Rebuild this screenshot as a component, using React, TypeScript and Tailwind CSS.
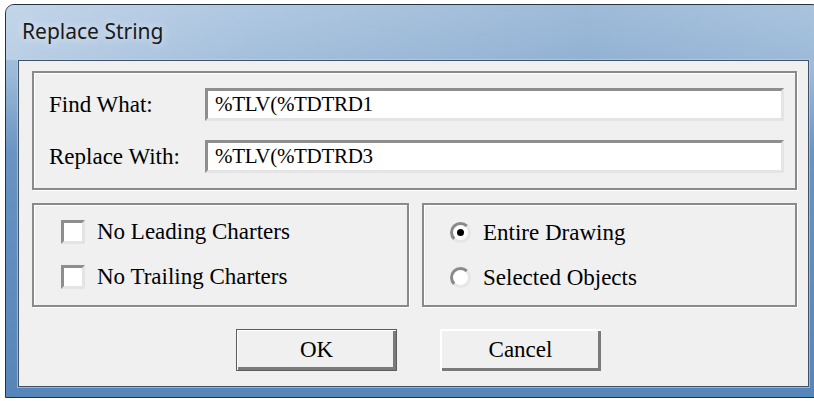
import type { ReactNode } from "react"

const serif = "font-['Liberation_Serif','Times_New_Roman',serif]"

// sunken white box used by edits and check boxes
const sunken = "bg-white border-[3px] border-t-[#8e8e8e] border-l-[#8e8e8e] border-b-[#e4e4e4] border-r-[#e4e4e4]"

function GroupBox({ className, children }: { className: string; children: ReactNode }) {
    return (
        <div className={"border-2 border-[#8a8a8a] shadow-[inset_1px_1px_0_#ffffff,1px_1px_0_#ffffff] " + className}>
            {children}
        </div>
    )
}

function Field({ label, value }: { label: string; value: string }) {
    return (
        <div className="flex items-center">
            <span className="w-[156px] text-[23px] leading-[33px] text-black">{label}</span>
            <div className={sunken + " flex-1 h-[33px] flex items-center pl-[7px]"}>
                <span className="text-[21px] text-black tracking-[-0.3px]">{value}</span>
            </div>
        </div>
    )
}

function CheckRow({ label }: { label: string }) {
    return (
        <label className="flex items-center gap-[12px] h-[24px]">
            <span className={sunken + " w-[24px] h-[24px]"} />
            <span className="text-[23px] leading-[24px] text-black">{label}</span>
        </label>
    )
}

function RadioRow({ label, checked }: { label: string; checked?: boolean }) {
    return (
        <label className="flex items-center gap-[12px] h-[21px]">
            <span className="w-[21px] h-[21px] rounded-full bg-white border-[3px] border-t-[#8a8a8a] border-l-[#8a8a8a] border-b-[#e6e6e6] border-r-[#e6e6e6] flex items-center justify-center">
                {checked && <span className="w-[7px] h-[7px] rounded-full bg-black" />}
            </span>
            <span className="text-[23px] leading-[21px] text-black">{label}</span>
        </label>
    )
}

function DlgButton({ label, isDefault }: { label: string; isDefault?: boolean }) {
    return (
        <button
            className={
                isDefault
                    ? "w-[161px] h-[42px] border border-[#5c5c5c] bg-[#f0f0f0] shadow-[inset_1px_1px_0_#ffffff,inset_-3px_-3px_0_#7a7a7a] text-[23px] text-black flex items-center justify-center"
                    : "w-[161px] h-[42px] bg-[#f0f0f0] shadow-[inset_2px_2px_0_#ffffff,inset_-3px_-3px_0_#7a7a7a] text-[23px] text-black flex items-center justify-center"
            }
        >
            {label}
        </button>
    )
}

export default function App() {
    return (
        <div className="w-[814px] h-[401px] bg-white overflow-hidden">
            {/* aero window frame */}
            <div className="ml-[5px] mt-[4px] w-[816px] h-[394px] rounded-t-[9px] border border-[#27323f] bg-[linear-gradient(to_bottom,#b3cae2_0px,#9bb9d8_70px,#6893c2_150px,#5686b9_394px)] flex flex-col">
                <div className="h-[55px] rounded-t-[8px] bg-[linear-gradient(to_right,rgba(205,220,237,0.6)_0px,rgba(170,195,222,0.35)_250px,rgba(120,158,198,0.35)_580px,rgba(150,182,214,0.3)_816px)] pl-[16px] pt-[12px]">
                    <span className="font-['Noto_Sans','Open_Sans',sans-serif] text-[21px] leading-[28px] text-[#1a1a1a] [text-shadow:0_0_10px_rgba(255,255,255,0.8)]">
                        Replace String
                    </span>
                </div>
                <div className="ml-[12px] w-[791px] h-[327px] border border-[#415266] shadow-[0_0_0_1px_rgba(190,212,235,0.6)] bg-[#f0f0f0] flex flex-col pt-[10px] pl-[13px] pr-[11px]">
                    <div className={serif + " flex flex-col"}>
                        <GroupBox className="h-[119px] pt-[15px] pl-[15px] pr-[11px] flex flex-col gap-[19px]">
                            <Field label="Find What:" value="%TLV(%TDTRD1" />
                            <Field label="Replace With:" value="%TLV(%TDTRD3" />
                        </GroupBox>
                        <div className="mt-[13px] flex gap-[13px]">
                            <GroupBox className="w-[377px] h-[104px] pt-[15px] pl-[27px] flex flex-col gap-[21px]">
                                <CheckRow label="No Leading Charters" />
                                <CheckRow label="No Trailing Charters" />
                            </GroupBox>
                            <GroupBox className="flex-1 h-[104px] pt-[17px] pl-[26px] flex flex-col gap-[24px]">
                                <RadioRow label="Entire Drawing" checked />
                                <RadioRow label="Selected Objects" />
                            </GroupBox>
                        </div>
                        <div className="mt-[22px] ml-[204px] flex gap-[43px]">
                            <DlgButton label="OK" isDefault />
                            <DlgButton label="Cancel" />
                        </div>
                    </div>
                </div>
            </div>
        </div>
    )
}
